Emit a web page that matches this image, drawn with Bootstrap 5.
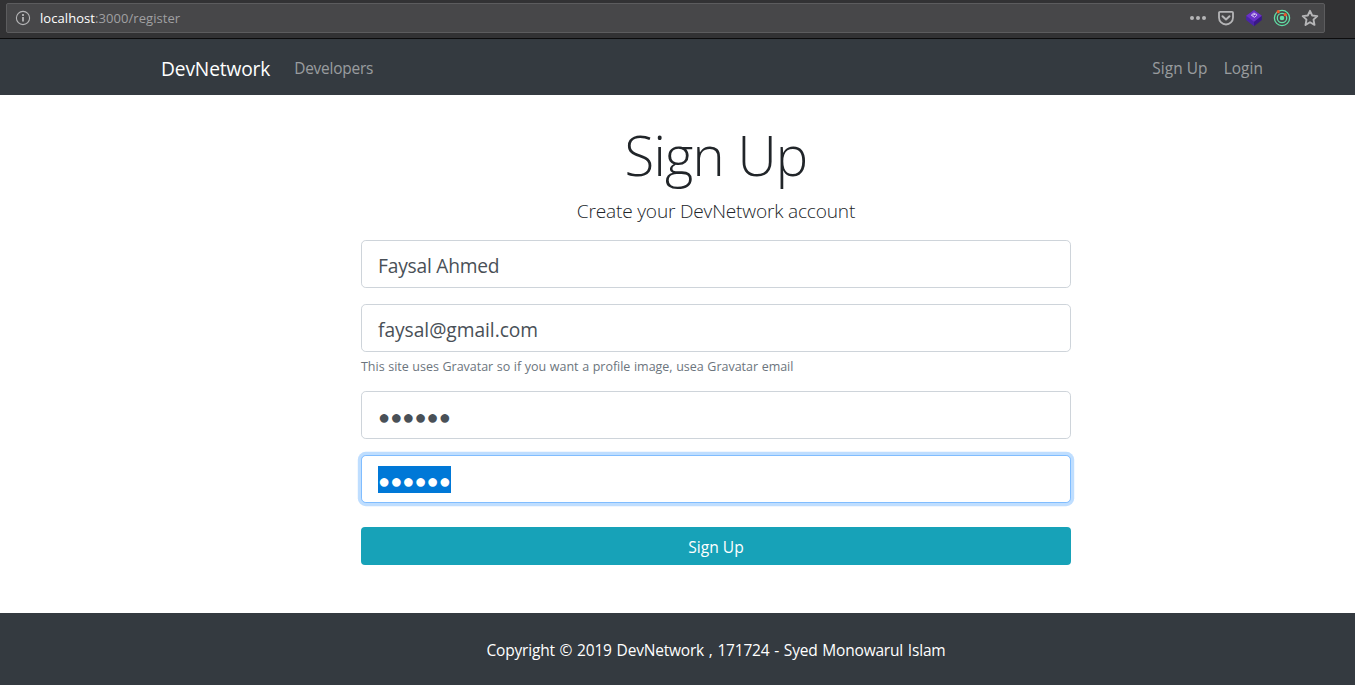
<!DOCTYPE html>
<html lang="en">
<head>
<meta charset="utf-8">
<meta name="viewport" content="width=device-width, initial-scale=1">
<title>DevNetwork</title>
<link href="https://cdn.jsdelivr.net/npm/bootstrap@5.3.0/dist/css/bootstrap.min.css" rel="stylesheet">
<style>
body{font-family:"Open Sans","Noto Sans",sans-serif;color:#212529;background:#fff}
.browser-bar{height:39px;background:#323234;border-bottom:1px solid #0c0c0d;padding:3px 30px 0 6px}
.url-box{height:30px;background:#474749;border:1px solid #5c5c5e;border-radius:2px;padding:0 5px 0 8px;font-size:13px;color:#a0a0a2}
.url-box b{font-weight:400;color:#fff}
.url-text{margin-left:9px;padding-top:2px;letter-spacing:.06px}
.url-icons{gap:10px}
.url-icons svg{width:18px;height:18px}
.site-col{width:1140px;max-width:1140px;margin-left:146px;margin-right:0;padding:0 15px}
.site-nav{height:56px;background:#343a40}
.site-nav .navbar-brand{font-size:19.2px;letter-spacing:-.15px;margin-right:16px;padding:3px 0 0;line-height:30px;color:#fff}
.site-nav .nav-link{font-size:15.4px;letter-spacing:-.2px;line-height:24px;padding:11px 8px 7px;color:rgba(255,255,255,.5)}
.site-nav .account-links .nav-link{letter-spacing:.08px}
.form-wrap{width:710px;padding-top:24px}
.title{font-size:54.4px;font-weight:300;line-height:67px;letter-spacing:-.7px;padding-top:3px;margin:0 0 7px}
.sub-title{font-size:19.1px;font-weight:300;line-height:30px;letter-spacing:-.18px;margin:0 0 14px}
.form-control-lg{height:48px;min-height:0;border:1px solid #ced4da;border-radius:4.8px;color:#495057;padding:10px 16px 6px;font-size:19.2px;line-height:30px}
.name-field{letter-spacing:-.2px;word-spacing:-.2px}
.mail-field{letter-spacing:-.04px}
.pass-field{font-size:20px;padding-top:10px;line-height:29px;letter-spacing:.05px}
.active-field{border-color:#80bdff;box-shadow:0 0 0 3.2px rgba(0,123,255,.25)}
.picked{display:block;width:73px;height:27px;background:#0078d7;color:#fff}
.hint{font-size:12.5px;line-height:18px;letter-spacing:-.02px;word-spacing:.4px;padding-top:2px;margin-top:4px;height:19px;color:#6c757d}
.btn-join{height:38px;background:#17a2b8;color:#fff;border-radius:4px;font-size:15.6px;line-height:24px;padding:8px 12px 6px;border:0}
.site-footer{background:#343a40;color:#fff;height:72px;font-size:15.5px;letter-spacing:-.2px;word-spacing:1px;line-height:24px;padding-top:25px}
</style>
</head>
<body>
<div class="browser-bar">
  <div class="url-box d-flex align-items-center">
    <svg width="16" height="16" viewBox="0 0 16 16" fill="none" stroke="#b5b5b7" stroke-width="1.1"><circle cx="8" cy="8" r="6.6"/><path d="M8 7v4.4" stroke-width="1.8"/><path d="M8 4.1v1.8" stroke-width="1.8"/></svg>
    <span class="url-text"><b>localhost</b>:3000/register</span>
    <div class="url-icons d-flex align-items-center ms-auto">
      <svg viewBox="0 0 18 18" fill="#b5b5b7"><circle cx="3" cy="9" r="2"/><circle cx="9" cy="9" r="2"/><circle cx="15" cy="9" r="2"/></svg>
      <svg viewBox="0 0 18 18" fill="none" stroke="#b5b5b7" stroke-width="2" stroke-linecap="round" stroke-linejoin="round"><path d="M3 2.800h12a1 1 0 0 1 1 1v4.700a7 7 0 0 1-14 0V3.800a1 1 0 0 1 1-1z" stroke-width="1.800"/><path d="M5.500 7.200 9 10.500l3.500-3.300"/></svg>
      <svg viewBox="0 0 18 18"><path d="M1.100 6.500V11L9 17.200V12z" fill="#4a25a8"/><path d="M16.900 6.500V11L9 17.200V12z" fill="#3a1888"/><path d="M9 1 16.900 6.800 9 12.800 1.100 6.800z" fill="#6a30c8"/><path d="M6.300 6.200 8.500 4.300q1.500-.6 1.800.8 1.800-.2 1.500 1.300L9.400 8.300zM7.500 6.200l2.600-.9" fill="none" stroke="#d9c8f5" stroke-width="1"/></svg>
      <svg viewBox="0 0 18 18" fill="none" stroke="#61dfa6" stroke-width="1.300"><circle cx="9" cy="9" r="7.600"/><circle cx="9" cy="9" r="4.700"/><circle cx="9" cy="9" r="2.300" fill="#61dfa6" stroke="none"/><circle cx="5.200" cy="2.700" r="1.600" fill="#f0592b" stroke="none"/><circle cx="12.300" cy="5.700" r="1.600" fill="#f0592b" stroke="none"/></svg>
      <svg viewBox="0 0 18 18" fill="none" stroke="#b5b5b7" stroke-width="1.900" stroke-linejoin="round"><path d="M9 1.800l2.200 4.700 5.100.6-3.800 3.500 1 5.300L9 13.300l-4.500 2.600 1-5.300L1.700 7.100l5.100-.6z"/></svg>
    </div>
  </div>
</div>
<nav class="navbar navbar-expand navbar-dark site-nav p-0">
  <div class="container site-col">
    <a class="navbar-brand" href="#">DevNetwork</a>
    <ul class="navbar-nav me-auto"><li class="nav-item"><a class="nav-link" href="#">Developers</a></li></ul>
    <ul class="navbar-nav account-links"><li class="nav-item"><a class="nav-link" href="#">Sign Up</a></li><li class="nav-item"><a class="nav-link" href="#">Login</a></li></ul>
  </div>
</nav>
<main class="container site-col">
  <form class="form-wrap mx-auto pb-5">
    <h1 class="title text-center">Sign Up</h1>
    <p class="sub-title text-center">Create your DevNetwork account</p>
    <div class="form-control form-control-lg name-field mb-3">Faysal Ahmed</div>
    <div class="form-control form-control-lg mail-field">faysal@gmail.com</div>
    <div class="hint mb-3">This site uses Gravatar so if you want a profile image, usea Gravatar email</div>
    <div class="form-control form-control-lg pass-field mb-3">●●●●●●</div>
    <div class="form-control form-control-lg pass-field active-field mb-4"><span class="picked">●●●●●●</span></div>
    <button type="button" class="btn btn-join w-100">Sign Up</button>
  </form>
</main>
<footer class="site-footer text-center">
  <div class="container site-col">Copyright © 2019 DevNetwork , 171724 - Syed Monowarul Islam</div>
</footer>
<script src="https://cdn.jsdelivr.net/npm/bootstrap@5.3.0/dist/js/bootstrap.bundle.min.js"></script>
</body>
</html>
